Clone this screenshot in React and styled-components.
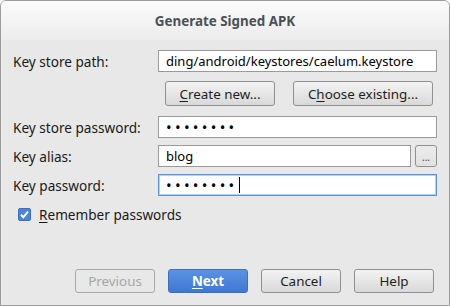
import React from 'react';
import styled, { createGlobalStyle } from 'styled-components';

const GlobalStyle = createGlobalStyle`
  html, body {
    margin: 0;
    padding: 0;
    background: #ffffff;
  }
  body {
    font-family: "Noto Sans", "Open Sans", sans-serif;
    font-size: 13px;
    color: #1a1a1a;
  }
`;

const Window = styled.div`
  width: 450px;
  height: 306px;
  box-sizing: border-box;
  border: 1px solid #9c9c9c;
  border-radius: 6px 6px 0 0;
  background: #e8e8e8;
  display: flex;
  flex-direction: column;
  overflow: hidden;
`;

const TitleBar = styled.div`
  height: 39px;
  flex: none;
  display: flex;
  align-items: center;
  justify-content: center;
  background: linear-gradient(#fbfbfb, #ececec);
  font-weight: bold;
  font-size: 13.4px;
  color: #4b5057;
`;

const Content = styled.div`
  flex: 1;
  display: flex;
  flex-direction: column;
  padding: 10px 12px 12px 12px;
`;

const Row = styled.div`
  display: grid;
  grid-template-columns: 145px 1fr;
  align-items: center;
  height: 22px;
  margin-top: ${(p) => p.$mt || 0}px;
`;

const Label = styled.span`
  white-space: nowrap;
  font-size: 13.6px;
`;

const Field = styled.div`
  height: 22px;
  box-sizing: border-box;
  background: #ffffff;
  border: 1px solid ${(p) => (p.$focused ? '#5c94dc' : '#9a9a9a')};
  box-shadow: ${(p) => (p.$focused ? 'inset 0 0 0 1px #b4d0f3' : 'none')};
  display: flex;
  align-items: center;
  padding-left: 7px;
  overflow: hidden;
  white-space: nowrap;
  color: #000;
  min-width: 0;
`;

const Dots = styled.span`
  font-size: 15px;
  letter-spacing: 3.3px;
  line-height: 1;
`;

const Caret = styled.span`
  display: inline-block;
  width: 1px;
  height: 16px;
  background: #000;
  margin-left: 1px;
`;

const FieldGroup = styled.div`
  display: flex;
  gap: 4px;
  min-width: 0;
`;

const Button = styled.button`
  box-sizing: border-box;
  height: ${(p) => p.$h || 24}px;
  width: ${(p) => p.$w}px;
  padding: 0;
  font-family: inherit;
  font-size: 13.4px;
  border-radius: 3px;
  border: 1px solid #909090;
  color: #1e1e1e;
  background: linear-gradient(#f3f3f3, #d9d9d9);
  display: flex;
  align-items: center;
  justify-content: center;
  white-space: nowrap;
`;

const PrimaryButton = styled(Button)`
  border-color: #3c6fc0;
  background: linear-gradient(#5b92e2, #3f78d4);
  color: #ffffff;
  font-weight: bold;
`;

const DisabledButton = styled(Button)`
  border-color: #a9a9a9;
  background: #e8e8e8;
  color: #a6a6a6;
`;

const SmallButton = styled(Button)`
  width: 22px;
  height: 22px;
  flex: none;
  font-size: 10px;
  color: #444;
  background: linear-gradient(#ececec, #e2e2e2);
  padding-top: 2px;
`;

const Mn = styled.span`
  text-decoration: underline;
  text-underline-offset: 2px;
`;

const ButtonRow = styled.div`
  display: flex;
  justify-content: flex-end;
  gap: 18px;
  margin-top: 9px;
  padding-right: 4px;
`;

const CheckRow = styled.label`
  display: flex;
  align-items: center;
  gap: 8px;
  margin-top: 11px;
  padding-left: 5px;
  height: 14px;
  font-size: 13.6px;
`;

const Footer = styled.div`
  margin-top: auto;
  display: flex;
  justify-content: flex-end;
  gap: 13px;
  padding-right: 3px;
`;

function CheckBox() {
  return (
    <svg width="13" height="13" viewBox="0 0 13 13">
      <rect x="0.5" y="0.5" width="12" height="12" rx="1.5" fill="#4a84d8" stroke="#3a6fc2" />
      <path d="M3 6.8 L5.4 9.2 L10 3.6" fill="none" stroke="#ffffff" strokeWidth="2" />
    </svg>
  );
}

export default function App() {
  return (
    <>
      <GlobalStyle />
      <Window>
        <TitleBar>Generate Signed APK</TitleBar>
        <Content>
          <Row>
            <Label>Key store path:</Label>
            <Field>ding/android/keystores/caelum.keystore</Field>
          </Row>
          <ButtonRow>
            <Button $w={110} $h={25}>
              <Mn>C</Mn>reate new...
            </Button>
            <Button $w={140} $h={25}>
              C<Mn>h</Mn>oose existing...
            </Button>
          </ButtonRow>
          <Row $mt={10}>
            <Label>Key store password:</Label>
            <Field>
              <Dots>••••••••</Dots>
            </Field>
          </Row>
          <Row $mt={7}>
            <Label>Key alias:</Label>
            <FieldGroup>
              <Field style={{ flex: 1 }}>blog</Field>
              <SmallButton>...</SmallButton>
            </FieldGroup>
          </Row>
          <Row $mt={7}>
            <Label>Key password:</Label>
            <Field $focused>
              <Dots>••••••••</Dots>
              <Caret />
            </Field>
          </Row>
          <CheckRow>
            <CheckBox />
            <span>
              <Mn>R</Mn>emember passwords
            </span>
          </CheckRow>
          <Footer>
            <DisabledButton $w={80}>Previous</DisabledButton>
            <PrimaryButton $w={80}>
              <Mn>N</Mn>ext
            </PrimaryButton>
            <Button $w={80}>Cancel</Button>
            <Button $w={80}>Help</Button>
          </Footer>
        </Content>
      </Window>
    </>
  );
}
